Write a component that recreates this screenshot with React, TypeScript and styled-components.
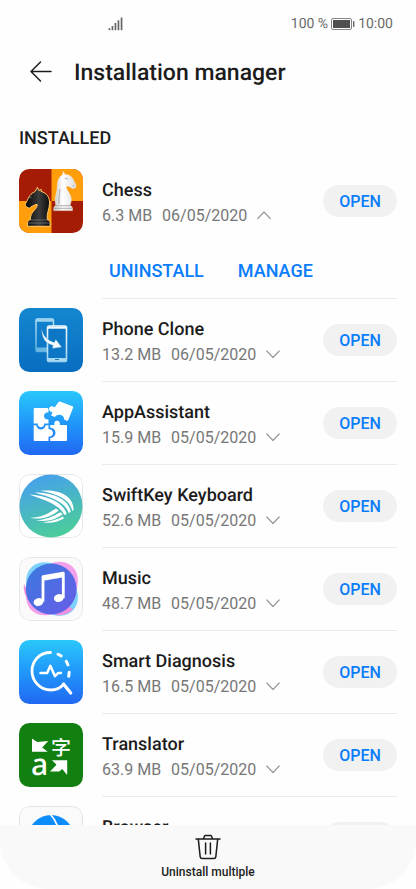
import React, { useState } from "react";
import styled, { createGlobalStyle } from "styled-components";

const GlobalStyle = createGlobalStyle`
  * { box-sizing: border-box; }
  body {
    margin: 0;
    background: #fefefe;
    color: #1c1c1c;
    font-family: Roboto, "Noto Sans", sans-serif;
    text-rendering: geometricPrecision;
  }
  button { font: inherit; border: 0; padding: 0; background: none; cursor: pointer; }
`;

const Screen = styled.div`
  display: flex;
  flex-direction: column;
  height: 100vh;
  overflow: hidden;
`;

const StatusBar = styled.div`
  display: flex;
  align-items: center;
  justify-content: space-between;
  height: 48px;
  padding: 0 23px 0 108px;
  flex: none;
  color: #6b6b6b;
  font-size: 14px;
`;

const StatusGroup = styled.div`
  display: flex;
  align-items: center;
  gap: 3px;
`;

const Header = styled.header`
  display: flex;
  align-items: center;
  gap: 18px;
  height: 50px;
  padding: 0 26px;
  flex: none;
`;

const BackButton = styled.button`
  display: flex;
  align-items: center;
  justify-content: center;
  width: 30px;
  height: 30px;
  color: #1c1c1c;
`;

const Title = styled.h1`
  margin: 0;
  font-size: 23px;
  line-height: 30px;
  font-weight: 500;
`;

const Content = styled.main`
  flex: 1;
  min-height: 0;
  overflow-y: auto;
  scrollbar-width: none;
  padding: 27px 19px 0;
`;

const SectionTitle = styled.h2`
  margin: 0 0 7px;
  font-size: 18px;
  line-height: 28px;
  font-weight: 500;
`;

const AppList = styled.ul`
  list-style: none;
  margin: 0;
  padding: 0;
`;

const AppRow = styled.li`
  display: grid;
  grid-template-columns: 64px 1fr;
  column-gap: 19px;
`;

const IconCell = styled.div`
  padding-top: 9px;
  svg { display: block; }
`;

const RowBody = styled.div`
  border-bottom: 1px solid #ebebeb;
`;

const RowMain = styled.div`
  display: flex;
  align-items: center;
  justify-content: space-between;
  height: 82px;
`;

const RowText = styled.div`
  padding-top: 4px;
`;

const AppName = styled.h3`
  margin: 0;
  font-size: 18px;
  line-height: 26px;
  font-weight: 500;
`;

const Details = styled.button`
  display: flex;
  align-items: center;
  gap: 10px;
  color: #777;
  font-size: 16px;
  line-height: 24px;
`;

const OpenButton = styled.button`
  width: 74px;
  height: 32px;
  border-radius: 16px;
  background: #f1f1f1;
  color: #0a7dfa;
  font-size: 16px;
  font-weight: 500;
`;

const Actions = styled.div`
  display: flex;
  align-items: center;
  gap: 34px;
  height: 56px;
  padding: 2px 0 0 7px;
`;

const ActionButton = styled.button`
  color: #0a7dfa;
  font-size: 18px;
  line-height: 28px;
  font-weight: 500;
`;

const BottomBar = styled.footer`
  display: flex;
  justify-content: center;
  height: 64px;
  flex: none;
  background: #f9f9f9;
  border-radius: 0 0 48px 48px;
`;

const BottomButton = styled.button`
  display: flex;
  flex-direction: column;
  align-items: center;
  gap: 4px;
  padding-top: 7px;
  color: #1c1c1c;
  font-size: 12px;
  line-height: 16px;
  font-weight: 500;
`;

const SignalIcon = () => (
  <svg width="16" height="14" viewBox="0 0 16 14" fill="#666" aria-hidden="true">
    <rect x="0.6" y="11.2" width="1.7" height="2" />
    <rect x="3.6" y="9" width="1.7" height="4.2" />
    <rect x="6.6" y="6" width="1.7" height="7.2" />
    <rect x="9.6" y="3.3" width="1.7" height="9.9" />
    <rect x="12.7" y="0.5" width="1.7" height="12.7" />
  </svg>
);

const BatteryIcon = () => (
  <svg width="24" height="12" viewBox="0 0 24 12" aria-hidden="true">
    <rect x="0.5" y="0.5" width="20" height="11" rx="1.5" fill="#fff" stroke="#777" strokeWidth="0.9" />
    <rect x="2" y="2" width="17" height="8" fill="#505050" />
    <rect x="22" y="3" width="1.4" height="6" rx="0.5" fill="#606060" />
  </svg>
);

const BackIcon = () => (
  <svg width="24" height="24" viewBox="0 0 24 24" fill="none" stroke="currentColor" strokeWidth="1.5" strokeLinecap="round" strokeLinejoin="round" aria-hidden="true">
    <path d="M11.5 1 2 10.5l9.5 9.5M2 10.5h20" />
  </svg>
);

const Chevron = ({ up }: { up: boolean }) => (
  <svg width="14" height="10" viewBox="0 0 14 10" fill="none" stroke="#9a9a9a" strokeWidth="1.2" strokeLinecap="round" strokeLinejoin="round" aria-hidden="true">
    <path d={up ? "M0.8 7.5 7 1 13.2 7.5" : "M0.8 1 7 7.5l6.2-6.5"} />
  </svg>
);

const TrashIcon = () => (
  <svg width="28" height="28" viewBox="0 0 28 28" fill="none" stroke="currentColor" strokeWidth="1.5" strokeLinecap="round" strokeLinejoin="round" aria-hidden="true">
    <path d="M2 7h24M9.5 6.8l.9-2.5c.2-.6.5-.8 1.1-.8h5c.6 0 .9.2 1.1.8l.9 2.5M4.3 7.2l1.9 17.6c.2 1.3.8 1.8 2 1.8h11.6c1.2 0 1.8-.5 2-1.8l1.9-17.6M11.6 11v11M16.4 11v11" />
  </svg>
);

const Tile = ({ children, clip }: { children: React.ReactNode; clip: string }) => (
  <svg width="64" height="64" viewBox="0 0 64 64" aria-hidden="true">
    <defs>
      <clipPath id={clip}><rect width="64" height="64" rx="10.5" /></clipPath>
    </defs>
    <g clipPath={`url(#${clip})`}>{children}</g>
  </svg>
);

const ChessIcon = () => (
  <Tile clip="chess">
    <defs>
      <linearGradient id="whitePiece" x1="0" x2="1">
        <stop offset="0" stopColor="#c4c4c4" /><stop offset="0.4" stopColor="#fff" /><stop offset="1" stopColor="#dcdcdc" />
      </linearGradient>
      <linearGradient id="blackPiece" x1="0" x2="1">
        <stop offset="0" stopColor="#050505" /><stop offset="0.55" stopColor="#3c3c3c" /><stop offset="1" stopColor="#0a0a0a" />
      </linearGradient>
    </defs>
    <path fill="#a51c04" d="M0 0h64v64H0z" />
    <path fill="#ff9d0b" d="M32.5 0H64v32H32.5zM0 32h32.5v32H0z" />
    <path fill="url(#whitePiece)" stroke="#eee" strokeWidth="0.5" d="M44.4 2.6l1.5 2.8c5 .2 8 3 9.2 7 1 2.2 2.2 3.3 1.9 5.1-.3 1.8-2.5 2.4-4.1 1.7-1.7-1.8-4.2-2.3-5.8-1.9-.2 4 5.8 8 5.1 14.3-.1 2-.7 3.5-1.3 4.9 1.4.5 2.3 1.4 2.5 2.7v2.4H34.7v-2.4c.2-1.3 1-2.2 2.2-2.7-1.2-4.2-.8-8.6.5-12.3 1.2-4.1.4-8.9 1.8-13 .9-2.7 2.6-4.4 4.3-5.4z" />
    <path fill="none" stroke="#999" strokeWidth="0.8" d="M46 9.2l2.8.8M53.5 17.2l2-1M37 36.7h14M35 39.3h18M41 20c-.7 5-1.4 9-1 15" />
    <path fill="url(#blackPiece)" stroke="#ffcb68" strokeWidth="1" d="M18.3 18.2l1.6 3.4 2.4-1.2-.3 2c5.7 1.6 8.9 5.8 8.5 12.5-.3 5.6-3 9.5-2.2 15.8 1.7.4 2.7 1.4 2.8 2.8v3.8H8.6v-3.8c.1-1.4 1-2.4 2.8-2.8-.5-8.1 7.2-10.3 6.8-15.2-2.5-.3-3.5 1.5-6 2.1-.9 1.7-2.8 2-4.2.6-1.6-.7-2-2.5-1.2-4.2 2.5-3.7 3-8.5 8.6-11 .8-.6 2.4-3.1 2.9-4.8z" />
    <path fill="none" stroke="#8d8d8d" strokeWidth="0.6" d="M10 29l2.8-1M11.5 51h17M9.4 54h21" />
  </Tile>
);

const PhoneCloneIcon = () => (
  <Tile clip="clone">
    <defs>
      <linearGradient id="cloneBg" x1="0" x2="0" y1="0" y2="1"><stop offset="0" stopColor="#1487d1" /><stop offset="1" stopColor="#086dbf" /></linearGradient>
      <linearGradient id="clonePhone" x1="0" x2="0" y1="0" y2="1"><stop offset="0" stopColor="#b9e3f7" /><stop offset="1" stopColor="#5cafe0" /></linearGradient>
      <linearGradient id="cloneFront" x1="0" x2="0" y1="0" y2="1"><stop offset="0" stopColor="#f6fcff" /><stop offset="1" stopColor="#9bd3f2" /></linearGradient>
    </defs>
    <path fill="url(#cloneBg)" d="M0 0h64v64H0z" />
    <rect x="17" y="11" width="17.5" height="32.5" rx="1.6" fill="none" stroke="url(#clonePhone)" strokeWidth="1.5" />
    <path stroke="#9cd5f1" strokeWidth="2.4" d="M17.5 12.5h17" />
    <path stroke="#6ab9e5" strokeWidth="4" d="M17.5 41.5h11" />
    <rect x="28.5" y="18" width="19" height="35.5" rx="1.8" fill="#0d77c5" stroke="url(#cloneFront)" strokeWidth="1.6" />
    <path stroke="#eef9ff" strokeWidth="2.4" d="M29 19.6h18" />
    <path stroke="#a5d8f3" strokeWidth="3" d="M29 51.5h18" />
    <path stroke="#2678ae" strokeWidth="1" d="M36 51.5h4" />
    <path fill="#f5fbff" stroke="#0d77c5" strokeWidth="0.4" d="M22.7 20c1.2 8 5.2 12.2 12.7 14.3l1.3-3.1 6.2 8-9.9 1.3 1-3.1c-8.2-1.6-12-8.8-11.3-17.4z" />
  </Tile>
);

const BlueBackground = ({ id }: { id: string }) => (
  <>
    <defs><linearGradient id={id} x1="0" x2="0" y1="0" y2="1"><stop offset="0" stopColor="#2ac8fb" /><stop offset="0.5" stopColor="#2097fa" /><stop offset="1" stopColor="#2168f2" /></linearGradient></defs>
    <path fill={`url(#${id})`} d="M0 0h64v64H0z" />
  </>
);

const AssistantIcon = () => (
  <Tile clip="assistant">
    <BlueBackground id="assistantBg" />
    <g fill="#fff">
      <path d="M16 17h12.2c1 0 1.3.7 1.3 1.5v2.8c-6-.2-6 7.5 0 7.3v3.9h-4.3c.2 5-6.7 5-6.5 0h-4V18.2c0-.8.5-1.2 1.3-1.2z" />
      <path d="M14.7 34.2h2.5c.8 5.6 8.6 5.6 9.5 0h2.8v4.2c5.8-.8 6.2 8 0 7.2V50H16c-.8 0-1.3-.5-1.3-1.3z" />
      <path d="M31.2 34h4.4c-1.8-5.5 6.5-5.8 5.2 0H47c.7 0 1 .4 1 1v13.8c0 .8-.4 1.2-1.2 1.2H31.2v-3c7-.5 7-9.8 0-10.5z" />
      <path d="M41 10.5l12.5 4.7c.7.3.9.8.7 1.4l-4.9 12.5c-.3.7-.9.9-1.6.6l-2.3-.9c-.2-5.1-6.7-6.9-9.5-2.8l-3.8-1.5 1.4-3.6c-5 .2-4.2-6.7.3-5.5.8.2 1.4.7 1.7 1.2l4-5.4c.4-.6.8-.9 1.5-.7z" />
    </g>
  </Tile>
);

const SwiftKeyIcon = () => (
  <Tile clip="swift">
    <defs><linearGradient id="swiftBg" x1="0.3" x2="0.65" y1="0" y2="1"><stop offset="0" stopColor="#46a0ed" /><stop offset="1" stopColor="#4cce97" /></linearGradient></defs>
    <rect x="0.5" y="0.5" width="63" height="63" rx="10" fill="#fff" stroke="#e6e6e6" />
    <circle cx="32" cy="32" r="31.5" fill="url(#swiftBg)" />
    <g fill="#fff">
      <path d="M21.5 16.8C39 15 54.3 21 54.7 35.8l-1.3 1.2C50.5 25 38.5 19.8 21.5 16.8z" />
      <path d="M15.5 18.6c16.8.2 33.6 5.2 36.3 19.3l-2 1.2C46 28 33 23.5 15.5 18.6z" />
      <path d="M10.2 20.5c17.2 1.4 33.4 6.5 37.6 19.6l-2.3 1C40.5 31 27.2 26.3 10.2 20.5z" />
      <path d="M11 43.7c10.4.2 18.3-4 26-9.2l2.6 2c-7.1 5.8-16.7 10-28.6 7.2z" />
      <path d="M17 46.3c10-.7 17-3.8 24.4-8.1l2.3 2.1C36.2 45.8 27.4 48.4 17 46.3z" />
      <path d="M23.5 48.2c7.9-1 14.4-2.4 20.6-5.8l.8 2.2c-7.2 4-13.3 5-21.4 3.6z" />
    </g>
  </Tile>
);

const MusicIcon = () => (
  <Tile clip="music">
    <defs><linearGradient id="musicBg" x1="0" x2="1" y1="0" y2="1"><stop offset="0" stopColor="#397adf" /><stop offset="1" stopColor="#695ce8" /></linearGradient></defs>
    <rect x="0.5" y="0.5" width="63" height="63" rx="10" fill="#fafafa" stroke="#e6e6e6" />
    <ellipse cx="33" cy="31.5" rx="22" ry="30" fill="#f3a0ea" transform="rotate(42 33 31.5)" />
    <ellipse cx="33" cy="32" rx="22" ry="30" fill="#67c9fa" opacity="0.85" transform="rotate(-42 33 32)" />
    <path fill="#ee92e0" d="M5 27l14 27-9-9C6 39 4 33 5 27zM36 58c7 1 14-1 18-6l-5-3z" />
    <circle cx="32.2" cy="32" r="25.4" fill="url(#musicBg)" />
    <path fill="none" stroke="#fff" strokeWidth="2.8" strokeLinejoin="round" d="M24 44.5V19.7l20.3-3.5v25" />
    <path stroke="#fff" strokeWidth="4" d="M24 21.7l20.3-3.3" />
    <ellipse cx="19.5" cy="45" rx="4.9" ry="3.9" fill="#fff" transform="rotate(-12 19.5 45)" />
    <ellipse cx="39.8" cy="41" rx="4.9" ry="3.9" fill="#fff" transform="rotate(-12 39.8 41)" />
  </Tile>
);

const DiagnosisIcon = () => (
  <Tile clip="diagnosis">
    <BlueBackground id="diagnosisBg" />
    <g fill="none" stroke="#fff" strokeWidth="2.8" strokeLinecap="round" strokeLinejoin="round">
      <path d="M31.5 12.5C20.5 12.5 13 21 13 31s8 19 19 19c5.5 0 9.3-2 12.5-5.5" />
      <path d="M39 14.2l3.2 1.7M47.3 21.3l1.7 3.5M50.2 32.2l-.5 4" strokeWidth="3" />
      <path d="M44.5 44l7.2 9" strokeWidth="3.2" />
      <path d="M21.5 33h6.7l3.1-7.2 4.7 10.4 3.1-3.2h2.8" strokeWidth="2.5" />
    </g>
  </Tile>
);

const GlyphText = styled.text`
  fill: #fff;
  font-family: "Noto Sans", "Noto Sans CJK SC", sans-serif;
`;

const TranslatorIcon = () => (
  <Tile clip="translator">
    <path fill="#128010" d="M0 0h64v64H0z" />
    <path fill="#fff" d="M13 15.5l5.2 3.4 11-1-6 6.5 5.5 4.3H13zM48.2 52V37.2H33l4.5 4.5-6.5 6.8h9.2l3-2.5z" />
    <GlyphText x="12" y="52" fontSize="30" fontWeight="500">a</GlyphText>
    <GlyphText x="32" y="32" fontSize="20" fontWeight="500">字</GlyphText>
  </Tile>
);

const BrowserIcon = () => (
  <Tile clip="browser">
    <rect x="0.5" y="0.5" width="63" height="63" rx="10" fill="#fafafa" stroke="#e2e2e2" />
    <circle cx="32" cy="32" r="23" fill="#0d8dfa" />
    <path fill="none" stroke="#fff" strokeWidth="1.7" d="M31 8c4 4 7 9 9 17M9 25c13 6 33 8 46 0" />
  </Tile>
);

const apps = [
  { name: "Chess", size: "6.3 MB", date: "06/05/2020", Icon: ChessIcon },
  { name: "Phone Clone", size: "13.2 MB", date: "06/05/2020", Icon: PhoneCloneIcon },
  { name: "AppAssistant", size: "15.9 MB", date: "05/05/2020", Icon: AssistantIcon },
  { name: "SwiftKey Keyboard", size: "52.6 MB", date: "05/05/2020", Icon: SwiftKeyIcon },
  { name: "Music", size: "48.7 MB", date: "05/05/2020", Icon: MusicIcon },
  { name: "Smart Diagnosis", size: "16.5 MB", date: "05/05/2020", Icon: DiagnosisIcon },
  { name: "Translator", size: "63.9 MB", date: "05/05/2020", Icon: TranslatorIcon },
  { name: "Browser", size: "58.2 MB", date: "05/05/2020", Icon: BrowserIcon },
];

export default function App() {
  const [expanded, setExpanded] = useState<string | null>("Chess");

  return (
    <Screen>
      <GlobalStyle />
      <StatusBar>
        <SignalIcon />
        <StatusGroup>
          <span>100 %</span>
          <BatteryIcon />
          <span>10:00</span>
        </StatusGroup>
      </StatusBar>
      <Header>
        <BackButton aria-label="Back"><BackIcon /></BackButton>
        <Title>Installation manager</Title>
      </Header>
      <Content>
        <SectionTitle>INSTALLED</SectionTitle>
        <AppList>
          {apps.map(({ name, size, date, Icon }) => {
            const open = expanded === name;
            return (
              <AppRow key={name}>
                <IconCell><Icon /></IconCell>
                <RowBody>
                  <RowMain>
                    <RowText>
                      <AppName>{name}</AppName>
                      <Details
                        aria-expanded={open}
                        onClick={() => setExpanded(open ? null : name)}
                      >
                        <span>{size}</span>
                        <span>{date}</span>
                        <Chevron up={open} />
                      </Details>
                    </RowText>
                    <OpenButton>OPEN</OpenButton>
                  </RowMain>
                  {open && (
                    <Actions>
                      <ActionButton>UNINSTALL</ActionButton>
                      <ActionButton>MANAGE</ActionButton>
                    </Actions>
                  )}
                </RowBody>
              </AppRow>
            );
          })}
        </AppList>
      </Content>
      <BottomBar>
        <BottomButton>
          <TrashIcon />
          <span>Uninstall multiple</span>
        </BottomButton>
      </BottomBar>
    </Screen>
  );
}
